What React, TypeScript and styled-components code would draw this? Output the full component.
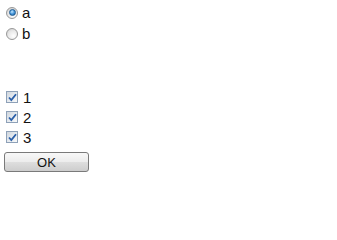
import React from 'react';
import styled, { createGlobalStyle } from 'styled-components';

const GlobalStyle = createGlobalStyle`
  html, body {
    margin: 0;
    padding: 0;
    background: #ffffff;
  }
  body {
    font-family: "Liberation Sans", Arial, sans-serif;
    color: #000000;
  }
`;

const Page = styled.div`
  display: flex;
  flex-direction: column;
  align-items: flex-start;
  padding: 2px 0 0 4px;
`;

const Group = styled.div<{ $rowHeight: number; $marginTop?: number }>`
  display: flex;
  flex-direction: column;
  margin-top: ${(p) => p.$marginTop ?? 0}px;

  & > label {
    height: ${(p) => p.$rowHeight}px;
  }
`;

const Row = styled.label<{ $gap: number }>`
  display: flex;
  align-items: center;
  gap: ${(p) => p.$gap}px;
  padding-left: 2px;
  font-size: 15px;
  line-height: 1;
  color: #111111;
`;

const RadioMark = styled.span<{ $checked: boolean }>`
  display: flex;
  align-items: center;
  justify-content: center;
  width: 12px;
  height: 12px;
  box-sizing: border-box;
  border-radius: 50%;
  border: 1px solid #989898;
  background: radial-gradient(circle at 65% 70%, #ffffff 0%, #e8e8e8 55%, #c6c6c6 100%);
  flex-shrink: 0;

  &::after {
    content: '';
    display: ${(p) => (p.$checked ? 'block' : 'none')};
    width: 7px;
    height: 7px;
    box-sizing: border-box;
    border-radius: 50%;
    border: 1px solid #1d5b92;
    background: radial-gradient(circle at 40% 35%, #c4e8ff 0%, #4f9ee0 45%, #125a9c 100%);
  }
`;

const CheckMark = styled.span`
  display: flex;
  align-items: center;
  justify-content: center;
  width: 12px;
  height: 12px;
  box-sizing: border-box;
  border: 1px solid #8ea1b8;
  background: linear-gradient(135deg, #cfd6de 0%, #e9edf1 60%, #f8f9fa 100%);
  flex-shrink: 0;

  svg {
    display: block;
  }
`;

const Button = styled.button`
  margin-top: 5px;
  width: 85px;
  height: 20px;
  padding: 0;
  box-sizing: border-box;
  border: 1px solid #7a7a7a;
  border-radius: 3px;
  background: linear-gradient(to bottom, #f8f8f8 0%, #ececec 50%, #dedede 51%, #cdcdcd 100%);
  font-family: "Liberation Sans", Arial, sans-serif;
  font-size: 13px;
  color: #111111;
  line-height: 1;
`;

const Radio: React.FC<{ label: string; checked?: boolean }> = ({ label, checked = false }) => (
  <Row $gap={4}>
    <RadioMark $checked={checked} />
    <span>{label}</span>
  </Row>
);

const Checkbox: React.FC<{ label: string }> = ({ label }) => (
  <Row $gap={5}>
    <CheckMark>
      <svg width="9" height="9" viewBox="0 0 9 9">
        <path d="M1 4.5 L3.3 7 L8 1.2" fill="none" stroke="#2a5fa8" strokeWidth="1.8" />
      </svg>
    </CheckMark>
    <span>{label}</span>
  </Row>
);

export default function App() {
  return (
    <>
      <GlobalStyle />
      <Page>
        <Group $rowHeight={21}>
          <Radio label="a" checked />
          <Radio label="b" />
        </Group>
        <Group $rowHeight={20} $marginTop={43}>
          <Checkbox label="1" />
          <Checkbox label="2" />
          <Checkbox label="3" />
        </Group>
        <Button>OK</Button>
      </Page>
    </>
  );
}
